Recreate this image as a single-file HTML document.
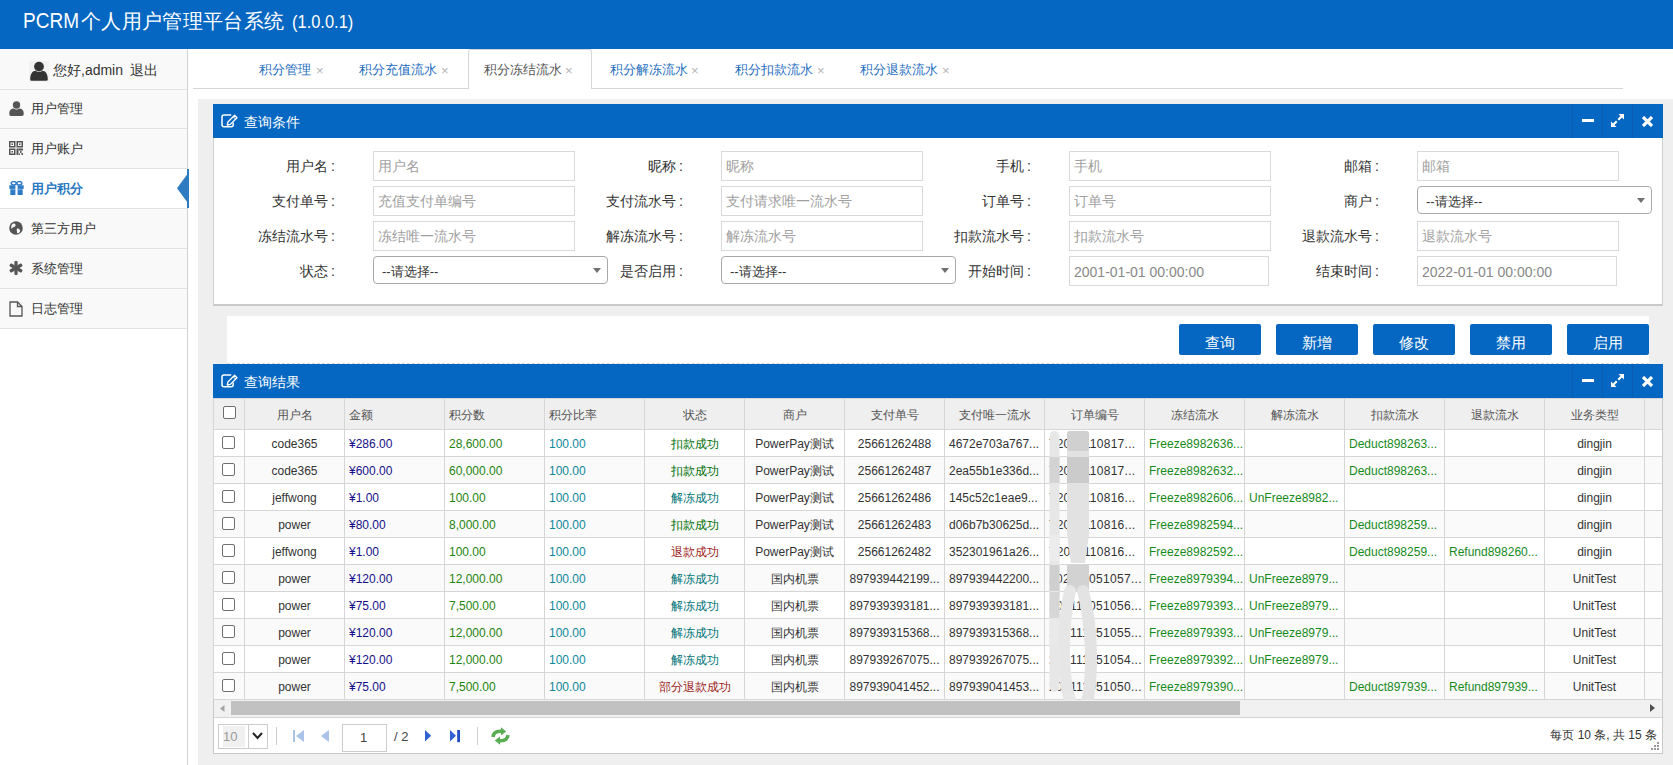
<!DOCTYPE html><html><head><meta charset="utf-8"><style>
*{box-sizing:border-box;margin:0;padding:0}
html,body{width:1673px;height:765px;overflow:hidden;background:#fff;font-family:"Liberation Sans",sans-serif;color:#333}
body{position:relative}
.a{position:absolute;white-space:nowrap}
#hdr{left:0;top:0;width:1673px;height:49px;background:#0567c1}
#side{left:0;top:49px;width:188px;height:716px;background:#fff;border-right:1px solid #d2d2d2}
.mi{left:0;width:187px;height:40px;border-bottom:1px solid #e2e2e2;font-size:13px;color:#333}
#tabs{left:193px;top:49px;width:1430px;height:40px;border-bottom:1px solid #d6d6d6}
.tab{font-size:13px;color:#1f6ebf}
.x{font-size:13px;color:#b5b5b5}
#bg{left:198px;top:99px;width:1475px;height:666px;background:#efefef}
.ph{height:34px;background:#0567c1;color:#fff;font-size:14px}
.tb{top:0;width:30px;height:34px;border-left:1px solid #0a5cab}
.inp{height:30px;border:1px solid #d9d9d9;background:#fff;font-size:14px;color:#a0a0a0}
.inp span{position:absolute;left:4px;top:6px}
.sel{border:1px solid #a9a9a9;border-radius:4px;background:#fff;font-size:13px;color:#333}
.sel span{position:absolute;left:8px;top:6px}
.sel b{position:absolute;right:6px;top:11px;width:0;height:0;border-left:4px solid transparent;border-right:4px solid transparent;border-top:5px solid #707070}
.lbl{font-size:14px;color:#333}
.btn{top:324px;width:82px;height:31px;background:#0567c1;border-radius:2px;color:#fff;font-size:15px;text-align:center;line-height:38px}
table{border-collapse:collapse;table-layout:fixed;font-size:12px}
td,th{border:1px solid #d6d6d6;overflow:hidden;white-space:nowrap;font-weight:normal;padding:0}
th{height:31px;color:#555;padding-top:2px}
td{height:27px;padding-top:2px}
.c{text-align:center}.l{text-align:left;padding-left:4px}
.navy{color:#16108a}.g1{color:#1f8410}.teal{color:#0e879a}.dg{color:#006e06}.tl{color:#007478}.red{color:#9c1c20}.gr{color:#178a1c}
.ord{letter-spacing:0.3px}
.cb{display:inline-block;width:13px;height:13px;border:1px solid #6f6f6f;border-radius:2px;background:#fff;vertical-align:middle;position:relative;top:-2px}
.cbr{left:-1px;top:-2px}
</style></head><body>
<div id="hdr" class="a"><div class="a" style="left:23px;top:8px;font-size:22px;color:#fff;transform:scaleX(.865);transform-origin:0 0">PCRM</div><div class="a" style="left:81px;top:8px;font-size:20px;letter-spacing:.35px;color:#fff">个人用户管理平台系统</div><div class="a" style="left:292px;top:11px;font-size:18.5px;color:#fff;transform:scaleX(.89);transform-origin:0 0">(1.0.0.1)</div></div>
<div id="side" class="a">
<div class="a" style="left:0;top:0;width:187px;height:41px;background:#f9f9f9;border-bottom:1px solid #e2e2e2"></div>
</div>
<svg class="a" style="left:29px;top:61px" width="20" height="21" viewBox="0 0 20 21"><rect width="20" height="21" fill="#f1f1f1"/><circle cx="10" cy="5.6" r="4.9" fill="#333"/><path d="M1.2 18.5 C1.2 12.8 3.6 9.8 6.6 9.8 Q10 12.2 13.4 9.8 C16.4 9.8 18.8 12.8 18.8 18.5 Q18.8 19.8 17.4 19.8 H2.6 Q1.2 19.8 1.2 18.5Z" fill="#333"/></svg>
<div class="a" style="left:53px;top:62px;font-size:14px;color:#333">您好,admin</div>
<div class="a" style="left:130px;top:62px;font-size:14px;color:#333">退出</div>
<div class="a mi" style="top:90px;height:39px;background:#f9f9f9"></div>
<div class="a" style="left:9px;top:101px"><svg width="15" height="15" viewBox="0 0 15 15"><circle cx="7.5" cy="4" r="3.7" fill="#555"/><path d="M0.3 12 C0.3 9.3 2.2 7.6 4.6 7.6 Q7.5 9.4 10.4 7.6 C12.8 7.6 14.7 9.3 14.7 12 V13.3 Q14.7 15 13 15 H2 Q0.3 15 0.3 13.3 Z" fill="#555"/></svg></div>
<div class="a" style="left:31px;top:100px;font-size:13px;color:#333;font-weight:normal">用户管理</div>
<div class="a mi" style="top:129px;background:#f9f9f9"></div>
<div class="a" style="left:9px;top:141px"><svg width="14" height="14" viewBox="0 0 14 14"><g fill="none" stroke="#555" stroke-width="1.5"><rect x="0.75" y="0.75" width="5" height="5"/><rect x="8.25" y="0.75" width="5" height="5"/><rect x="0.75" y="8.25" width="5" height="5"/></g><g fill="#555"><rect x="2.5" y="2.5" width="1.5" height="1.5"/><rect x="10" y="2.5" width="1.5" height="1.5"/><rect x="2.5" y="10" width="1.5" height="1.5"/><rect x="7.5" y="7.5" width="2" height="6.5"/><rect x="9.5" y="7.5" width="4.5" height="2"/><rect x="11" y="10" width="1.5" height="2"/><rect x="12.5" y="12" width="1.5" height="2"/><rect x="10" y="12.5" width="1" height="1.5"/></g></svg></div>
<div class="a" style="left:31px;top:140px;font-size:13px;color:#333;font-weight:normal">用户账户</div>
<div class="a mi" style="top:169px;background:#fff"></div>
<div class="a" style="left:9px;top:181px"><svg width="15" height="14" viewBox="0 0 15 14"><ellipse cx="4.7" cy="2.3" rx="2.5" ry="1.7" fill="none" stroke="#2f7bc6" stroke-width="1.5"/><ellipse cx="10.3" cy="2.3" rx="2.5" ry="1.7" fill="none" stroke="#2f7bc6" stroke-width="1.5"/><rect x="0.3" y="4.3" width="14.4" height="3.6" fill="#2f7bc6"/><rect x="1.3" y="8.3" width="12.4" height="5.7" fill="#2f7bc6"/><rect x="6.4" y="4.3" width="2.2" height="9.7" fill="#fff"/></svg></div>
<div class="a" style="left:31px;top:180px;font-size:13px;color:#2a78c2;font-weight:bold">用户积分</div>
<div class="a mi" style="top:209px;background:#f9f9f9"></div>
<div class="a" style="left:9px;top:221px"><svg width="14" height="14" viewBox="0 0 14 14"><circle cx="7" cy="7" r="6.8" fill="#555"/><path d="M4 2.5 C6 2 7 3.5 6.5 5 C5.5 6.5 3 6 2.5 8 C2 6 2 4 4 2.5Z M8 7.5 C10 7 11.5 8.5 11 10.5 C10.5 12 9 12.5 8 12 C8.5 10.5 7 9 8 7.5Z" fill="#f9f9f9"/></svg></div>
<div class="a" style="left:31px;top:220px;font-size:13px;color:#333;font-weight:normal">第三方用户</div>
<div class="a mi" style="top:249px;background:#f9f9f9"></div>
<div class="a" style="left:9px;top:261px"><svg width="14" height="14" viewBox="0 0 14 14" fill="#555"><g transform="translate(7 7)"><rect x="-1.6" y="-7" width="3.2" height="14" rx="1"/><rect x="-1.6" y="-7" width="3.2" height="14" rx="1" transform="rotate(60)"/><rect x="-1.6" y="-7" width="3.2" height="14" rx="1" transform="rotate(-60)"/></g></svg></div>
<div class="a" style="left:31px;top:260px;font-size:13px;color:#333;font-weight:normal">系统管理</div>
<div class="a mi" style="top:289px;background:#f9f9f9"></div>
<div class="a" style="left:9px;top:301px"><svg width="14" height="16" viewBox="0 0 14 16" fill="none" stroke="#555" stroke-width="1.3"><path d="M1 1 H8.5 L13 5.5 V15 H1 Z"/><path d="M8.5 1 V5.5 H13"/></svg></div>
<div class="a" style="left:31px;top:300px;font-size:13px;color:#333;font-weight:normal">日志管理</div>
<svg class="a" style="left:176px;top:169px" width="13" height="39" viewBox="0 0 13 39"><path d="M11.5 5 L1 19.2 L11.5 33.5 Z" fill="#2f7bc2"/><rect x="11" y="0" width="2" height="39" fill="#2f7bc2"/></svg>
<div id="tabs" class="a"></div>
<div class="a" style="left:468px;top:49px;width:124px;height:40px;background:#fff;border:1px solid #d6d6d6;border-bottom:none;border-radius:3px 3px 0 0"></div>
<div class="a tab" style="left:259px;top:61px;color:#1f6ebf">积分管理</div>
<div class="a x" style="left:316px;top:63px">×</div>
<div class="a tab" style="left:359px;top:61px;color:#1f6ebf">积分充值流水</div>
<div class="a x" style="left:441px;top:63px">×</div>
<div class="a tab" style="left:484px;top:61px;color:#555">积分冻结流水</div>
<div class="a x" style="left:565px;top:63px">×</div>
<div class="a tab" style="left:610px;top:61px;color:#1f6ebf">积分解冻流水</div>
<div class="a x" style="left:691px;top:63px">×</div>
<div class="a tab" style="left:735px;top:61px;color:#1f6ebf">积分扣款流水</div>
<div class="a x" style="left:817px;top:63px">×</div>
<div class="a tab" style="left:860px;top:61px;color:#1f6ebf">积分退款流水</div>
<div class="a x" style="left:942px;top:63px">×</div>
<div id="bg" class="a"></div>
<div class="a ph" style="left:213px;top:104px;width:1450px"></div>
<svg class="a" style="left:221px;top:114px" width="18" height="14" viewBox="0 0 18 14" fill="none" stroke="#fff"><path d="M10.2 1 H3 Q1 1 1 3 V10.8 Q1 12.8 3 12.8 H10.2 Q12.2 12.8 12.2 10.8 V8.6" stroke-width="1.5"/><path d="M6.3 11 L6.9 8 L13.6 1.3 L16 3.7 L9.3 10.4 Z" stroke-width="1.3" stroke-linejoin="round"/><path d="M12.2 2.7 L14.6 5.1" stroke-width="1"/></svg>
<div class="a" style="left:244px;top:114px;font-size:14px;color:#fff">查询条件</div>
<div class="a" style="left:1572px;top:104px;width:1px;height:34px;background:#0b5cad"></div>
<div class="a" style="left:1602px;top:104px;width:1px;height:34px;background:#0b5cad"></div>
<div class="a" style="left:1632px;top:104px;width:1px;height:34px;background:#0b5cad"></div>
<div class="a" style="left:1582px;top:119px;width:12px;height:3px;background:#fff"></div>
<svg class="a" style="left:1611px;top:114px" width="13" height="13" viewBox="0 0 13 13" fill="#fff"><path d="M7.5 0 H13 V5.5 L11 3.5 L8 6.5 L6.5 5 L9.5 2 Z"/><path d="M5.5 13 H0 V7.5 L2 9.5 L5 6.5 L6.5 8 L3.5 11 Z"/></svg>
<svg class="a" style="left:1642px;top:116px" width="11" height="11" viewBox="0 0 11 11" stroke="#fff" stroke-width="3.2" stroke-linecap="butt"><path d="M1 1 L10 10 M10 1 L1 10"/></svg>
<div class="a" style="left:213px;top:138px;width:1450px;height:168px;background:#fff;border-left:1px solid #d0d0d0;border-right:1px solid #d0d0d0;border-bottom:2px solid #c9c9c9"></div>
<div class="a lbl" style="right:1338px;top:158px">用户名<span style="margin-left:3px">:</span></div>
<div class="a inp" style="left:373px;top:151px;width:202px"><span>用户名</span></div>
<div class="a lbl" style="right:990px;top:158px">昵称<span style="margin-left:3px">:</span></div>
<div class="a inp" style="left:721px;top:151px;width:202px"><span>昵称</span></div>
<div class="a lbl" style="right:642px;top:158px">手机<span style="margin-left:3px">:</span></div>
<div class="a inp" style="left:1069px;top:151px;width:202px"><span>手机</span></div>
<div class="a lbl" style="right:294px;top:158px">邮箱<span style="margin-left:3px">:</span></div>
<div class="a inp" style="left:1417px;top:151px;width:202px"><span>邮箱</span></div>
<div class="a lbl" style="right:1338px;top:193px">支付单号<span style="margin-left:3px">:</span></div>
<div class="a inp" style="left:373px;top:186px;width:202px"><span>充值支付单编号</span></div>
<div class="a lbl" style="right:990px;top:193px">支付流水号<span style="margin-left:3px">:</span></div>
<div class="a inp" style="left:721px;top:186px;width:202px"><span>支付请求唯一流水号</span></div>
<div class="a lbl" style="right:642px;top:193px">订单号<span style="margin-left:3px">:</span></div>
<div class="a inp" style="left:1069px;top:186px;width:202px"><span>订单号</span></div>
<div class="a lbl" style="right:294px;top:193px">商户<span style="margin-left:3px">:</span></div>
<div class="a sel" style="left:1417px;top:186px;width:235px;height:28px"><span>--请选择--</span><b></b></div>
<div class="a lbl" style="right:1338px;top:228px">冻结流水号<span style="margin-left:3px">:</span></div>
<div class="a inp" style="left:373px;top:221px;width:202px"><span>冻结唯一流水号</span></div>
<div class="a lbl" style="right:990px;top:228px">解冻流水号<span style="margin-left:3px">:</span></div>
<div class="a inp" style="left:721px;top:221px;width:202px"><span>解冻流水号</span></div>
<div class="a lbl" style="right:642px;top:228px">扣款流水号<span style="margin-left:3px">:</span></div>
<div class="a inp" style="left:1069px;top:221px;width:202px"><span>扣款流水号</span></div>
<div class="a lbl" style="right:294px;top:228px">退款流水号<span style="margin-left:3px">:</span></div>
<div class="a inp" style="left:1417px;top:221px;width:202px"><span>退款流水号</span></div>
<div class="a lbl" style="right:1338px;top:263px">状态<span style="margin-left:3px">:</span></div>
<div class="a sel" style="left:373px;top:256px;width:235px;height:28px"><span>--请选择--</span><b></b></div>
<div class="a lbl" style="right:990px;top:263px">是否启用<span style="margin-left:3px">:</span></div>
<div class="a sel" style="left:721px;top:256px;width:235px;height:28px"><span>--请选择--</span><b></b></div>
<div class="a lbl" style="right:642px;top:263px">开始时间<span style="margin-left:3px">:</span></div>
<div class="a inp" style="left:1069px;top:256px;width:200px;font-size:14px;color:#888"><span style="top:7px">2001-01-01 00:00:00</span></div>
<div class="a lbl" style="right:294px;top:263px">结束时间<span style="margin-left:3px">:</span></div>
<div class="a inp" style="left:1417px;top:256px;width:200px;font-size:14px;color:#888"><span style="top:7px">2022-01-01 00:00:00</span></div>
<div class="a" style="left:227px;top:316px;width:1422px;height:48px;background:#fff;border-bottom:1px dashed #d8d8d8"></div>
<div class="a btn" style="left:1179px">查询</div>
<div class="a btn" style="left:1276px">新增</div>
<div class="a btn" style="left:1373px">修改</div>
<div class="a btn" style="left:1470px">禁用</div>
<div class="a btn" style="left:1567px">启用</div>
<div class="a ph" style="left:213px;top:364px;width:1450px"></div>
<svg class="a" style="left:221px;top:374px" width="18" height="14" viewBox="0 0 18 14" fill="none" stroke="#fff"><path d="M10.2 1 H3 Q1 1 1 3 V10.8 Q1 12.8 3 12.8 H10.2 Q12.2 12.8 12.2 10.8 V8.6" stroke-width="1.5"/><path d="M6.3 11 L6.9 8 L13.6 1.3 L16 3.7 L9.3 10.4 Z" stroke-width="1.3" stroke-linejoin="round"/><path d="M12.2 2.7 L14.6 5.1" stroke-width="1"/></svg>
<div class="a" style="left:244px;top:374px;font-size:14px;color:#fff">查询结果</div>
<div class="a" style="left:1572px;top:364px;width:1px;height:34px;background:#0b5cad"></div>
<div class="a" style="left:1602px;top:364px;width:1px;height:34px;background:#0b5cad"></div>
<div class="a" style="left:1632px;top:364px;width:1px;height:34px;background:#0b5cad"></div>
<div class="a" style="left:1582px;top:379px;width:12px;height:3px;background:#fff"></div>
<svg class="a" style="left:1611px;top:374px" width="13" height="13" viewBox="0 0 13 13" fill="#fff"><path d="M7.5 0 H13 V5.5 L11 3.5 L8 6.5 L6.5 5 L9.5 2 Z"/><path d="M5.5 13 H0 V7.5 L2 9.5 L5 6.5 L6.5 8 L3.5 11 Z"/></svg>
<svg class="a" style="left:1642px;top:376px" width="11" height="11" viewBox="0 0 11 11" stroke="#fff" stroke-width="3.2" stroke-linecap="butt"><path d="M1 1 L10 10 M10 1 L1 10"/></svg>
<div class="a" style="left:213px;top:398px;width:1450px;height:356px;background:#fff;border:1px solid #c9c9c9;border-top:none"></div>
<div class="a" style="left:213px;top:398px;width:1449px;height:302px;overflow:hidden">
<table style="width:1501px">
<colgroup><col style="width:31px"><col style="width:100px"><col style="width:100px"><col style="width:100px"><col style="width:100px"><col style="width:100px"><col style="width:100px"><col style="width:100px"><col style="width:100px"><col style="width:100px"><col style="width:100px"><col style="width:100px"><col style="width:100px"><col style="width:100px"><col style="width:100px"><col style="width:70px"></colgroup>
<tr style="background:#efefef">
<th class="c"><span class="cb" style="top:-3px"></span></th>
<th class="c">用户名</th>
<th class="l">金额</th>
<th class="l">积分数</th>
<th class="l">积分比率</th>
<th class="c">状态</th>
<th class="c">商户</th>
<th class="c">支付单号</th>
<th class="c">支付唯一流水</th>
<th class="c">订单编号</th>
<th class="c">冻结流水</th>
<th class="c">解冻流水</th>
<th class="c">扣款流水</th>
<th class="c">退款流水</th>
<th class="c">业务类型</th>
<th></th></tr>
<tr style="background:#fff"><td class="c"><span class="cb cbr"></span></td>
<td class="c">code365</td>
<td class="l navy">¥286.00</td>
<td class="l g1">28,600.00</td>
<td class="l teal">100.00</td>
<td class="c dg">扣款成功</td>
<td class="c">PowerPay测试</td>
<td class="c">25661262488</td>
<td class="l">4672e703a767...</td>
<td class="l ord">T2021110817...</td>
<td class="l gr">Freeze8982636...</td>
<td class="l gr"></td>
<td class="l gr">Deduct898263...</td>
<td class="l gr"></td>
<td class="c">dingjin</td>
<td></td></tr>
<tr style="background:#fafafa"><td class="c"><span class="cb cbr"></span></td>
<td class="c">code365</td>
<td class="l navy">¥600.00</td>
<td class="l g1">60,000.00</td>
<td class="l teal">100.00</td>
<td class="c dg">扣款成功</td>
<td class="c">PowerPay测试</td>
<td class="c">25661262487</td>
<td class="l">2ea55b1e336d...</td>
<td class="l ord">T2021110817...</td>
<td class="l gr">Freeze8982632...</td>
<td class="l gr"></td>
<td class="l gr">Deduct898263...</td>
<td class="l gr"></td>
<td class="c">dingjin</td>
<td></td></tr>
<tr style="background:#fff"><td class="c"><span class="cb cbr"></span></td>
<td class="c">jeffwong</td>
<td class="l navy">¥1.00</td>
<td class="l g1">100.00</td>
<td class="l teal">100.00</td>
<td class="c tl">解冻成功</td>
<td class="c">PowerPay测试</td>
<td class="c">25661262486</td>
<td class="l">145c52c1eae9...</td>
<td class="l ord">T2021110816...</td>
<td class="l gr">Freeze8982606...</td>
<td class="l gr">UnFreeze8982...</td>
<td class="l gr"></td>
<td class="l gr"></td>
<td class="c">dingjin</td>
<td></td></tr>
<tr style="background:#fafafa"><td class="c"><span class="cb cbr"></span></td>
<td class="c">power</td>
<td class="l navy">¥80.00</td>
<td class="l g1">8,000.00</td>
<td class="l teal">100.00</td>
<td class="c dg">扣款成功</td>
<td class="c">PowerPay测试</td>
<td class="c">25661262483</td>
<td class="l">d06b7b30625d...</td>
<td class="l ord">T2021110816...</td>
<td class="l gr">Freeze8982594...</td>
<td class="l gr"></td>
<td class="l gr">Deduct898259...</td>
<td class="l gr"></td>
<td class="c">dingjin</td>
<td></td></tr>
<tr style="background:#fff"><td class="c"><span class="cb cbr"></span></td>
<td class="c">jeffwong</td>
<td class="l navy">¥1.00</td>
<td class="l g1">100.00</td>
<td class="l teal">100.00</td>
<td class="c red">退款成功</td>
<td class="c">PowerPay测试</td>
<td class="c">25661262482</td>
<td class="l">352301961a26...</td>
<td class="l ord">T2021110816...</td>
<td class="l gr">Freeze8982592...</td>
<td class="l gr"></td>
<td class="l gr">Deduct898259...</td>
<td class="l gr">Refund898260...</td>
<td class="c">dingjin</td>
<td></td></tr>
<tr style="background:#fafafa"><td class="c"><span class="cb cbr"></span></td>
<td class="c">power</td>
<td class="l navy">¥120.00</td>
<td class="l g1">12,000.00</td>
<td class="l teal">100.00</td>
<td class="c tl">解冻成功</td>
<td class="c">国内机票</td>
<td class="c">897939442199...</td>
<td class="l">897939442200...</td>
<td class="l ord">202111051057...</td>
<td class="l gr">Freeze8979394...</td>
<td class="l gr">UnFreeze8979...</td>
<td class="l gr"></td>
<td class="l gr"></td>
<td class="c">UnitTest</td>
<td></td></tr>
<tr style="background:#fff"><td class="c"><span class="cb cbr"></span></td>
<td class="c">power</td>
<td class="l navy">¥75.00</td>
<td class="l g1">7,500.00</td>
<td class="l teal">100.00</td>
<td class="c tl">解冻成功</td>
<td class="c">国内机票</td>
<td class="c">897939393181...</td>
<td class="l">897939393181...</td>
<td class="l ord">202111051056...</td>
<td class="l gr">Freeze8979393...</td>
<td class="l gr">UnFreeze8979...</td>
<td class="l gr"></td>
<td class="l gr"></td>
<td class="c">UnitTest</td>
<td></td></tr>
<tr style="background:#fafafa"><td class="c"><span class="cb cbr"></span></td>
<td class="c">power</td>
<td class="l navy">¥120.00</td>
<td class="l g1">12,000.00</td>
<td class="l teal">100.00</td>
<td class="c tl">解冻成功</td>
<td class="c">国内机票</td>
<td class="c">897939315368...</td>
<td class="l">897939315368...</td>
<td class="l ord">202111051055...</td>
<td class="l gr">Freeze8979393...</td>
<td class="l gr">UnFreeze8979...</td>
<td class="l gr"></td>
<td class="l gr"></td>
<td class="c">UnitTest</td>
<td></td></tr>
<tr style="background:#fff"><td class="c"><span class="cb cbr"></span></td>
<td class="c">power</td>
<td class="l navy">¥120.00</td>
<td class="l g1">12,000.00</td>
<td class="l teal">100.00</td>
<td class="c tl">解冻成功</td>
<td class="c">国内机票</td>
<td class="c">897939267075...</td>
<td class="l">897939267075...</td>
<td class="l ord">202111051054...</td>
<td class="l gr">Freeze8979392...</td>
<td class="l gr">UnFreeze8979...</td>
<td class="l gr"></td>
<td class="l gr"></td>
<td class="c">UnitTest</td>
<td></td></tr>
<tr style="background:#fafafa"><td class="c"><span class="cb cbr"></span></td>
<td class="c">power</td>
<td class="l navy">¥75.00</td>
<td class="l g1">7,500.00</td>
<td class="l teal">100.00</td>
<td class="c red">部分退款成功</td>
<td class="c">国内机票</td>
<td class="c">897939041452...</td>
<td class="l">897939041453...</td>
<td class="l ord">202111051050...</td>
<td class="l gr">Freeze8979390...</td>
<td class="l gr"></td>
<td class="l gr">Deduct897939...</td>
<td class="l gr">Refund897939...</td>
<td class="c">UnitTest</td>
<td></td></tr>
</table></div>
<svg class="a" style="left:1040px;top:425px" width="70" height="295" viewBox="0 0 70 295">
<g>
<rect x="9.5" y="6" width="10" height="261" rx="5" fill="#e7e7e7"/>
<rect x="9.5" y="32" width="10" height="26" fill="#d3d3d3"/>
<rect x="9.5" y="110" width="10" height="26" fill="#ececec"/>
<rect x="9.5" y="140" width="10" height="26" fill="#cfcfcf"/>
<rect x="9.5" y="167" width="10" height="26" fill="#d6d6d6"/>
<rect x="9.5" y="194" width="10" height="26" fill="#e9e9e9"/>
<path d="M27 10 Q27 6 31 6 H45 Q49 6 49 10 V110 L45 138 H31 L27 110 Z" fill="#e2e2e2"/>
<rect x="27" y="6" width="22" height="20" rx="3" fill="#d0d0d0"/>
<rect x="27" y="32" width="22" height="26" fill="#cbcbcb"/>
<rect x="27" y="140" width="22" height="26" fill="#d2d2d2"/>
<path d="M30 166 C22 200 22 250 30 275" stroke="#e6e6e6" stroke-width="12" fill="none" stroke-linecap="round"/>
<path d="M43 166 C52 200 54 250 46 282" stroke="#e3e3e3" stroke-width="12" fill="none" stroke-linecap="round"/>
<path d="M30 272 Q38 292 46 282" stroke="#e8e8e8" stroke-width="10" fill="none" stroke-linecap="round"/>
</g></svg>
<div class="a" style="left:214px;top:700px;width:1448px;height:18px;background:#f1f1f1;border-bottom:1px solid #d4d4d4"></div>
<div class="a" style="left:231px;top:701px;width:1009px;height:14px;background:#c1c1c1"></div>
<svg class="a" style="left:220px;top:705px" width="5" height="7"><path d="M4.5 0 L0 3.5 L4.5 7Z" fill="#a3a3a3"/></svg>
<svg class="a" style="left:1650px;top:704px" width="6" height="8"><path d="M0 0 L5 4 L0 8Z" fill="#505050"/></svg>
<div class="a" style="left:218px;top:724px;width:50px;height:25px;border:1px solid #ccc;background:#fff"></div>
<div class="a" style="left:219px;top:725px;width:30px;height:23px;background:#fff;border-right:1px solid #ccc"></div>
<div class="a" style="left:223px;top:726px;width:22px;height:21px;background:#f0f0f0"></div>
<div class="a" style="left:223px;top:729px;font-size:13px;color:#999">10</div>
<svg class="a" style="left:252px;top:732px" width="11" height="8" viewBox="0 0 11 8" fill="none" stroke="#222" stroke-width="2"><path d="M1 1 L5.5 6 L10 1"/></svg>
<div class="a" style="left:276px;top:727px;width:1px;height:18px;background:#ccc"></div>
<svg class="a" style="left:293px;top:729px" width="12" height="14" viewBox="0 0 12 14"><rect x="0" y="1" width="2" height="12" fill="#a8c2e8"/><path d="M11 1 L3 7 L11 13Z" fill="#a8c2e8"/></svg>
<svg class="a" style="left:321px;top:729px" width="8" height="14" viewBox="0 0 8 14"><path d="M8 1 L0 7 L8 13Z" fill="#a8c2e8"/></svg>
<div class="a" style="left:342px;top:724px;width:45px;height:28px;border:1px solid #ccc;background:#fff"></div>
<div class="a" style="left:360px;top:730px;font-size:13px;color:#444">1</div>
<div class="a" style="left:394px;top:729px;font-size:13px;color:#444">/ 2</div>
<svg class="a" style="left:425px;top:730px" width="7" height="12" viewBox="0 0 7 12"><path d="M0 0 L6.2 5.8 L0 11.6Z" fill="#2f63d2"/></svg>
<svg class="a" style="left:450px;top:730px" width="11" height="13" viewBox="0 0 11 13"><path d="M0 0 L6 5.8 L0 11.6Z" fill="#2f63d2"/><rect x="7.2" y="0" width="2.8" height="12.2" fill="#1f4fc0"/></svg>
<div class="a" style="left:477px;top:727px;width:1px;height:18px;background:#ccc"></div>
<svg class="a" style="left:491px;top:727px" width="19" height="18" viewBox="0 0 19 18"><g fill="none" stroke="#5aae52" stroke-width="3.4"><path d="M2 10 C2.5 5.5 6 4 10.5 4.3"/><path d="M17 8 C16.5 12.5 13 14 8.5 13.7"/></g><path d="M10 0.3 L15.2 4.4 L10 8.5Z" fill="#5aae52"/><path d="M9 9.5 L3.8 13.6 L9 17.7Z" fill="#5aae52"/></svg>
<div class="a" style="right:16px;top:727px;font-size:12px;color:#333">每页 10 条, 共 15 条</div>
<svg class="a" style="left:1650px;top:741px" width="10" height="10" viewBox="0 0 10 10" fill="#999"><rect x="7" y="1" width="2" height="2"/><rect x="4" y="4" width="2" height="2"/><rect x="7" y="4" width="2" height="2"/><rect x="1" y="7" width="2" height="2"/><rect x="4" y="7" width="2" height="2"/><rect x="7" y="7" width="2" height="2"/></svg>
</body></html>
